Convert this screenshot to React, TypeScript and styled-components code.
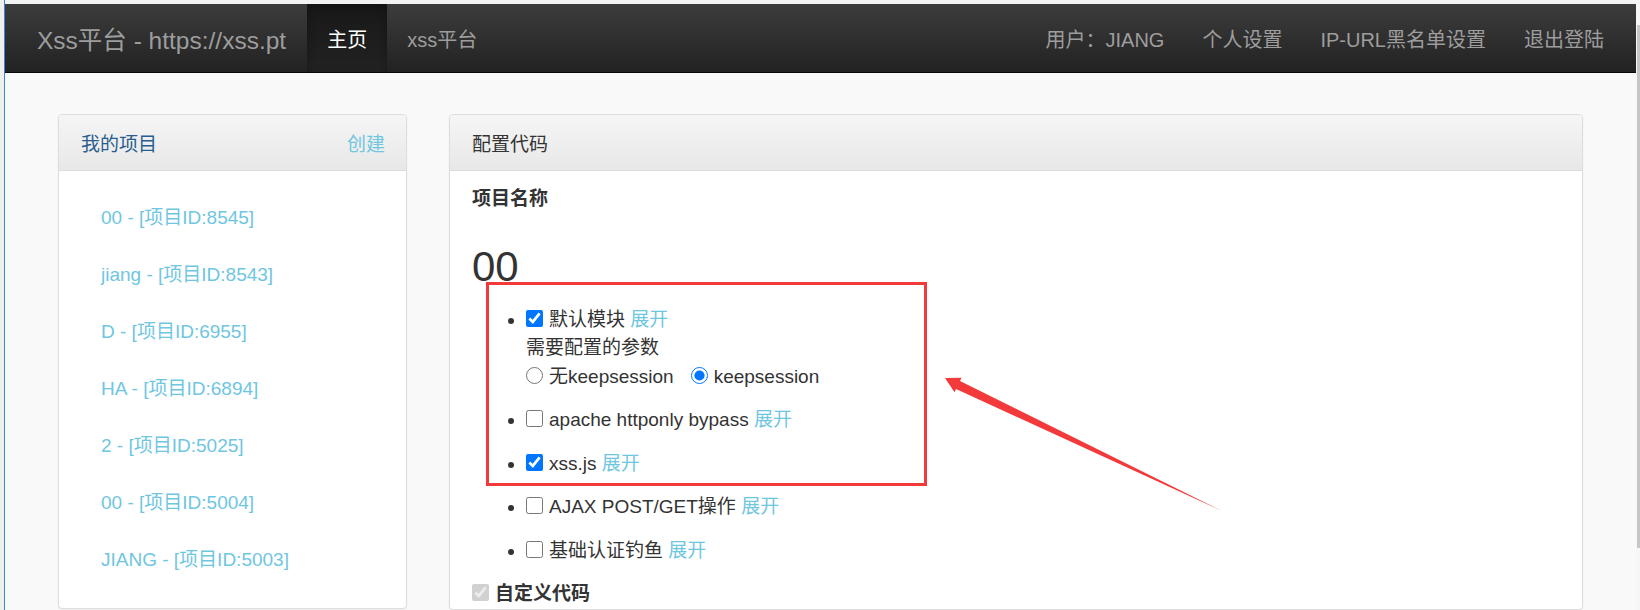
import React from 'react';
import styled, { createGlobalStyle } from 'styled-components';

const GlobalStyle = createGlobalStyle`
  html, body {
    margin: 0;
    padding: 0;
    overflow: hidden;
    background: #efefef;
  }
  body {
    font-family: "Liberation Sans", "Noto Sans CJK SC", sans-serif;
    color: #333;
  }
  * { box-sizing: border-box; }
`;

const Page = styled.div`
  position: relative;
  width: 1640px;
  height: 610px;
  overflow: hidden;
`;

const Frame = styled.div`
  height: 100%;
  margin-left: 4px;
  padding-top: 4px;
  border-left: 1px solid #3a87d6;
  background: #f3f3f3;
  display: flex;
`;

const Main = styled.div`
  flex: 1;
  display: flex;
  flex-direction: column;
  background: #f9f9f9;
  min-width: 0;
`;

const ScrollTrack = styled.div`
  width: 4px;
  background: #f6f6f6;
  padding: 21px 0 0 1px;
`;

const ScrollThumb = styled.div`
  height: 523px;
  background: #c6c6c6;
`;

/* top bar */
const Navbar = styled.nav`
  height: 69px;
  display: flex;
  align-items: stretch;
  background: linear-gradient(to bottom, #3c3c3c 0%, #222 100%);
  border-bottom: 1px solid #080808;
`;

const Brand = styled.a`
  display: flex;
  align-items: center;
  padding: 0 21px 0 32px;
  font-size: 24.5px;
  color: #9d9d9d;
  text-decoration: none;
`;

const NavItem = styled.a<{ $active?: boolean; $pad?: number }>`
  display: flex;
  align-items: center;
  padding: 0 ${p => p.$pad ?? 20}px;
  font-size: 20px;
  color: ${p => (p.$active ? '#fff' : '#9d9d9d')};
  text-decoration: none;
  background: ${p => (p.$active ? 'linear-gradient(to bottom, #181818 0%, #222 100%)' : 'transparent')};
  box-shadow: ${p => (p.$active ? 'inset 0 3px 9px rgba(0, 0, 0, 0.25)' : 'none')};
`;

const NavRight = styled.div`
  margin-left: auto;
  margin-right: 13px;
  display: flex;
`;

/* body */
const Content = styled.div`
  flex: 1;
  display: flex;
  align-items: flex-start;
  gap: 42px;
  padding: 41px 53px 0;
`;

const Panel = styled.div<{ $width?: number }>`
  ${p => (p.$width ? `width: ${p.$width}px;` : 'flex: 1;')}
  background: #fff;
  border: 1px solid #ddd;
  border-radius: 4px;
  box-shadow: 0 1px 2px rgba(0, 0, 0, 0.05);
`;

const PanelHeading = styled.div`
  height: 56px;
  display: flex;
  align-items: center;
  justify-content: space-between;
  padding: 0 21px 0 22px;
  background: linear-gradient(to bottom, #f5f5f5 0%, #e8e8e8 100%);
  border-bottom: 1px solid #ddd;
  border-radius: 3px 3px 0 0;
`;

const PanelTitle = styled.span<{ $tone?: 'blue' | 'dark' }>`
  font-size: 19px;
  color: ${p => (p.$tone === 'blue' ? '#2a5d8f' : '#333')};
`;

const InfoLink = styled.a`
  color: #6fc6df;
  text-decoration: none;
`;

const HeadingLink = styled(InfoLink)`
  font-size: 19px;
`;

const ProjectList = styled.div`
  padding: 19px 0;
`;

const ProjectLink = styled(InfoLink)`
  display: block;
  padding: 14.25px 42px;
  font-size: 19px;
  line-height: 28.5px;
`;

const PanelBody = styled.div`
  padding: 14px 22px 0;
  font-size: 19px;
  line-height: 28.5px;
`;

const FieldLabel = styled.div`
  font-weight: bold;
`;

const ProjectName = styled.div`
  margin: 30px 0 16px;
  font-size: 42px;
  line-height: 46px;
`;

const ModuleList = styled.ul`
  margin: 0;
  padding-left: 54px;
  list-style: disc;
`;

const ModuleItem = styled.li`
  margin-bottom: 15px;
`;

const Check = styled.input`
  width: 17px;
  height: 17px;
  margin: 0 6px 0 0;
  vertical-align: middle;
  position: relative;
  top: -2px;
`;

const Option = styled.label<{ $gap?: number }>`
  margin-left: ${p => p.$gap ?? 0}px;
`;

const CustomRow = styled.div`
  font-weight: bold;
`;

/* annotation drawn on top of the page */
const Highlight = styled.div`
  position: absolute;
  left: 486px;
  top: 282px;
  width: 441px;
  height: 204px;
  border: 3px solid #f23a3a;
  pointer-events: none;
`;

const Arrow = styled.svg`
  position: absolute;
  left: 0;
  top: 0;
  pointer-events: none;
`;

const projects = [
  '00 - [项目ID:8545]',
  'jiang - [项目ID:8543]',
  'D - [项目ID:6955]',
  'HA - [项目ID:6894]',
  '2 - [项目ID:5025]',
  '00 - [项目ID:5004]',
  'JIANG - [项目ID:5003]',
];

const modules = [
  { name: 'apache httponly bypass', on: false },
  { name: 'xss.js', on: true },
  { name: 'AJAX POST/GET操作', on: false },
  { name: '基础认证钓鱼', on: false },
];

export default function App() {
  return (
    <Page>
      <GlobalStyle />
      <Frame>
        <Main>
          <Navbar>
            <Brand href="#">Xss平台 - https://xss.pt</Brand>
            <NavItem href="#" $active>主页</NavItem>
            <NavItem href="#">xss平台</NavItem>
            <NavRight>
              <NavItem href="#" $pad={19}>用户：JIANG</NavItem>
              <NavItem href="#" $pad={19}>个人设置</NavItem>
              <NavItem href="#" $pad={19}>IP-URL黑名单设置</NavItem>
              <NavItem href="#" $pad={19}>退出登陆</NavItem>
            </NavRight>
          </Navbar>

          <Content>
            <Panel $width={349}>
              <PanelHeading>
                <PanelTitle $tone="blue">我的项目</PanelTitle>
                <HeadingLink href="#">创建</HeadingLink>
              </PanelHeading>
              <ProjectList>
                {projects.map((p, i) => (
                  <ProjectLink key={i} href="#">{p}</ProjectLink>
                ))}
              </ProjectList>
            </Panel>

            <Panel>
              <PanelHeading>
                <PanelTitle>配置代码</PanelTitle>
              </PanelHeading>
              <PanelBody>
                <FieldLabel>项目名称</FieldLabel>
                <ProjectName>00</ProjectName>
                <ModuleList>
                  <ModuleItem>
                    <Check type="checkbox" defaultChecked />
                    默认模块 <InfoLink href="#">展开</InfoLink>
                    <div>需要配置的参数</div>
                    <div>
                      <Option>
                        <Check type="radio" name="keep" />无keepsession
                      </Option>
                      <Option $gap={17}>
                        <Check type="radio" name="keep" defaultChecked />keepsession
                      </Option>
                    </div>
                  </ModuleItem>
                  {modules.map(m => (
                    <ModuleItem key={m.name}>
                      <Check type="checkbox" defaultChecked={m.on} />
                      {m.name} <InfoLink href="#">展开</InfoLink>
                    </ModuleItem>
                  ))}
                </ModuleList>
                <CustomRow>
                  <Check type="checkbox" defaultChecked disabled />
                  自定义代码
                </CustomRow>
              </PanelBody>
            </Panel>
          </Content>
        </Main>
        <ScrollTrack>
          <ScrollThumb />
        </ScrollTrack>
      </Frame>

      <Highlight />
      <Arrow width="1640" height="610" viewBox="0 0 1640 610">
        <polygon
          points="945,378 961.5,377.8 960,381 1222,511 956,389 954.5,392.2"
          fill="#f23a3a"
        />
      </Arrow>
    </Page>
  );
}
